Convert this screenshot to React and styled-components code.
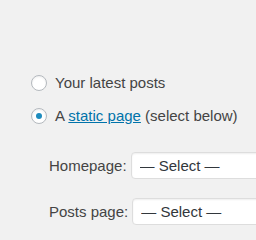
import React from 'react'
import styled, { createGlobalStyle } from 'styled-components'

const GlobalStyle = createGlobalStyle`
    html, body {
        margin: 0;
        background: #f1f1f1;
        overflow: hidden;
    }
    body {
        font-family: "Liberation Sans", Arial, sans-serif;
        font-size: 15px;
        color: #444;
    }
`

const Fieldset = styled.div`
    width: 256px;
    height: 240px;
    box-sizing: border-box;
    overflow: hidden;
    padding: 73px 0 0 31px;
`

const RadioList = styled.div`
    display: flex;
    flex-direction: column;
    gap: 13px;
`

const RadioRow = styled.label`
    display: flex;
    align-items: center;
    gap: 8px;
    height: 20px;
    line-height: 20px;
    white-space: nowrap;
`

const Radio = styled.span`
    position: relative;
    box-sizing: border-box;
    width: 16px;
    height: 16px;
    flex: none;
    border: 1px solid #b4b9be;
    border-radius: 50%;
    background: #fff;
    box-shadow: inset 0 1px 2px rgba(0, 0, 0, 0.07);

    &::before {
        content: '';
        display: ${(p) => (p.$checked ? 'block' : 'none')};
        position: absolute;
        left: 4px;
        top: 4px;
        width: 6px;
        height: 6px;
        border-radius: 50%;
        background: #1e8cbe;
    }
`

const Link = styled.a`
    color: #0073aa;
    text-decoration: underline;
`

const SubList = styled.div`
    display: flex;
    flex-direction: column;
    gap: 19px;
    margin-top: 26px;
    padding-left: 18px;
`

const SelectRow = styled.div`
    display: flex;
    align-items: center;
    gap: 4px;
    white-space: nowrap;
`

const Select = styled.select`
    appearance: none;
    box-sizing: border-box;
    width: 200px;
    height: 27px;
    flex: none;
    padding: 0 8px;
    border: 1px solid #ddd;
    border-radius: 4px;
    background: #fff;
    box-shadow: inset 0 1px 2px rgba(0, 0, 0, 0.07);
    font-family: "Liberation Sans", Arial, sans-serif;
    font-size: 15px;
    color: #32373c;
    outline: none;
`

export default function App() {
    return (
        <>
            <GlobalStyle />
            <Fieldset>
                <RadioList>
                    <RadioRow>
                        <Radio />
                        Your latest posts
                    </RadioRow>
                    <RadioRow>
                        <Radio $checked />
                        <span>
                            A <Link href="#">static page</Link> (select below)
                        </span>
                    </RadioRow>
                </RadioList>
                <SubList>
                    <SelectRow>
                        <label>Homepage:</label>
                        <Select defaultValue="0">
                            <option value="0">— Select —</option>
                        </Select>
                    </SelectRow>
                    <SelectRow>
                        <label>Posts page:</label>
                        <Select defaultValue="0">
                            <option value="0">— Select —</option>
                        </Select>
                    </SelectRow>
                </SubList>
            </Fieldset>
        </>
    )
}
